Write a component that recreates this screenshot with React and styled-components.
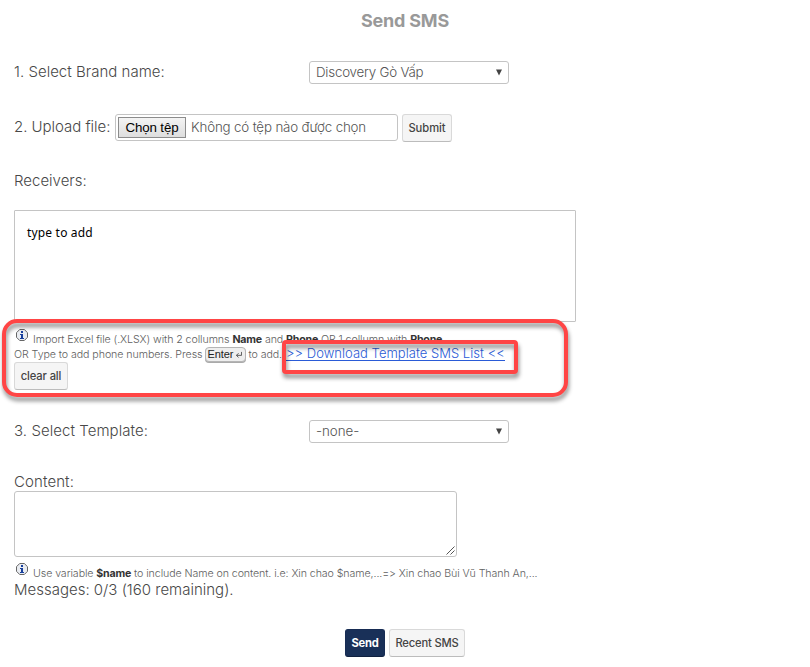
import React from "react";
import styled, { createGlobalStyle } from "styled-components";

const Global = createGlobalStyle`
  * { box-sizing: border-box; }
  body { margin: 0; background: #fff; color: #484848; font-family: Inter, "Liberation Sans", sans-serif; font-weight: 300; font-feature-settings: "calt" 0; }
`;

const Page = styled.main`
  position: relative;
  width: 810px;
  height: 667px;
  overflow: hidden;
  padding-left: 14px;
  display: flex;
  flex-direction: column;
`;

const Title = styled.h1`
  margin: 0 14px 0 0;
  height: 61px;
  padding: 9px 0 0 0;
  text-align: center;
  color: #999;
  font-size: 18px;
  line-height: 24px;
  font-weight: 700;
  letter-spacing: -0.2px;
`;

const Row = styled.div`
  display: flex;
  align-items: ${(p) => p.$align || "center"};
  flex: none;
  height: ${(p) => p.$h}px;
  margin-bottom: ${(p) => p.$after || 0}px;
  gap: 4px;
`;

const Actions = styled(Row)`
  justify-content: center;
  padding-right: 14px;
`;

const Label = styled.label`
  flex: none;
  width: ${(p) => (p.$w ? p.$w + "px" : "auto")};
  font-size: 15px;
  line-height: 18px;
  padding-bottom: ${(p) => p.$raise || 0}px;
  padding-top: ${(p) => p.$drop || 0}px;
  letter-spacing: ${(p) => p.$ls || 0}px;
  white-space: nowrap;
`;

const SelectBox = styled.div`
  width: 200px;
  height: 23px;
  border: 1px solid #c4c4c4;
  border-radius: 3px;
  padding: 0 6px 1px;
  display: flex;
  align-items: center;
  justify-content: space-between;
  font-size: 13.33px;
  color: #555;
  letter-spacing: ${(p) => p.$ls || 0}px;
`;

const Arrow = styled.svg`
  width: 6px;
  height: 7px;
  fill: #444;
`;

const FileBox = styled.div`
  width: 283px;
  height: 27px;
  border: 1px solid #c4c4c4;
  border-radius: 3px;
  padding: 0 2px;
  display: flex;
  align-items: center;
  gap: 5px;
  font-size: 13.33px;
  color: #555;
  white-space: nowrap;
  letter-spacing: -0.16px;
`;

const FileName = styled.span`
  padding-bottom: 1px;
`;

const FileButton = styled.span`
  width: 68px;
  height: 21px;
  border: 1px solid #8c8c8c;
  background: linear-gradient(#f4f4f4, #dedede);
  color: #000;
  font: 400 13.33px/19px "Liberation Sans", sans-serif;
  letter-spacing: -0.15px;
  text-align: center;
`;

const Button = styled.button`
  width: ${(p) => p.$w}px;
  height: 28px;
  flex: none;
  padding: 0 0 1px;
  border: 1px solid ${(p) => (p.$primary ? "#172c54" : "#d9d9d9")};
  border-bottom-color: ${(p) => (p.$primary ? "#10203f" : "#bcbcbc")};
  border-radius: 3px;
  background: ${(p) => (p.$primary ? "#193058" : "#f5f5f5")};
  color: ${(p) => (p.$primary ? "#fff" : "#444")};
  font-family: Inter, sans-serif;
  font-size: 11.2px;
  line-height: 14px;
  font-weight: ${(p) => (p.$primary ? 700 : 450)};
  letter-spacing: ${(p) => p.$ls || 0}px;
  white-space: nowrap;
`;

const TextBox = styled.div`
  flex: none;
  width: ${(p) => p.$w}px;
  height: ${(p) => p.$h}px;
  border: 1px solid #c4c4c4;
  border-radius: ${(p) => p.$r}px;
  display: flex;
`;

const Typed = styled.span`
  margin: 13px 12px;
  color: #000;
  font: 400 12px/18px "Noto Sans", sans-serif;
  letter-spacing: 0.18px;
`;

const Grip = styled.svg`
  width: 9px;
  height: 9px;
  margin: auto 1px 1px auto;
  stroke: #555;
  fill: none;
`;

const Hint = styled.div`
  display: flex;
  align-items: center;
  flex: none;
  height: ${(p) => p.$h}px;
  padding-top: ${(p) => p.$drop || 0}px;
  font-size: 10.67px;
  line-height: 15px;
  color: #606060;
  white-space: pre;
  letter-spacing: ${(p) => p.$ls || 0}px;
  b { font-weight: 700; color: #333; letter-spacing: -0.2px; }
`;

const InfoSvg = styled.svg`
  width: 12px;
  height: 12px;
  flex: none;
  margin: -8px 5px 0 2px;
`;

const Key = styled.kbd`
  width: 41px;
  height: 15px;
  margin: 0 3px 0 2px;
  border: 1px solid #b5b5b5;
  border-radius: 4px;
  background: #eee;
  box-shadow: 0 1px 0 #aaa;
  display: flex;
  align-items: center;
  justify-content: center;
  gap: 3px;
  color: #222;
  font: 400 11px/13px "Liberation Sans", sans-serif;
  letter-spacing: -0.1px;
`;

const ReturnSvg = styled.svg`
  width: 6px;
  height: 7px;
  margin-bottom: 1px;
  fill: none;
  stroke: #444;
`;

const Link = styled.a`
  margin-left: 4px;
  margin-bottom: 1px;
  font-size: 13px;
  line-height: 13px;
  color: #2a5bd7;
  border-bottom: 1px solid #2a5bd7;
  letter-spacing: 0.03px;
`;

const Marker = styled.div`
  position: absolute;
  left: ${(p) => p.$x}px;
  top: ${(p) => p.$y}px;
  width: ${(p) => p.$w}px;
  height: ${(p) => p.$h}px;
  border: 4px solid #ff4545;
  border-radius: ${(p) => p.$r}px;
  filter: drop-shadow(1px 4px 2px rgba(0, 0, 0, 0.45));
  pointer-events: none;
`;

const Down = () => (
  <Arrow viewBox="0 0 6 7"><path d="M0 0.5h6L3 6.5z" /></Arrow>
);

const Info = () => (
  <InfoSvg viewBox="0 0 12 12">
    <path d="M3.7 .5h4.6l3.2 3.2v4.6l-3.2 3.2H3.7L.5 8.3V3.7z" fill="#e9ecf1" stroke="#666" />
    <path d="M5 2h2v2H5zM4 5h3v4h1v1H4V9h1V6H4z" fill="#173f9c" />
  </InfoSvg>
);

export default function App() {
  return (
    <>
      <Global />
      <Page>
        <Title>Send SMS</Title>
        <Row $h={23} $after={30}>
          <Label $w={291} $raise={1} $ls={0.02}>1. Select Brand name:</Label>
          <SelectBox $ls={-0.22}><span>Discovery Gò Vấp</span><Down /></SelectBox>
        </Row>
        <Row $h={28} $after={30} $align="flex-start">
          <Label $w={97} $drop={4} $ls={-0.03}>2. Upload file:</Label>
          <FileBox><FileButton>Chọn tệp</FileButton><FileName>Không có tệp nào được chọn</FileName></FileBox>
          <Button $w={50} $ls={-0.05}>Submit</Button>
        </Row>
        <Row $h={18} $after={20}><Label>Receivers:</Label></Row>
        <TextBox $w={562} $h={112} $r={1}><Typed>type to add</Typed></TextBox>
        <Hint $h={25} $drop={9} $ls={-0.09}>
          <Info /><span>Import Excel file (.XLSX) with 2 collumns <b>Name</b> and <b>Phone</b> OR 1 collumn with <b>Phone</b></span>
        </Hint>
        <Hint $h={15} $ls={-0.08}>
          <span>OR Type to add phone numbers. Press</span>
          <Key>Enter<ReturnSvg viewBox="0 0 7 8"><path d="M6.5 1v4h-6M3 2.5L.5 5 3 7.5" /></ReturnSvg></Key>
          <span>to add.</span>
          <Link>&gt;&gt; Download Template SMS List &lt;&lt;</Link>
        </Hint>
        <Row $h={28} $after={30}><Button $w={54} $ls={-0.12}>clear all</Button></Row>
        <Row $h={23} $after={30}>
          <Label $w={291} $raise={1} $ls={0.06}>3. Select Template:</Label>
          <SelectBox><span>-none-</span><Down /></SelectBox>
        </Row>
        <Row $h={18}><Label $ls={0.1}>Content:</Label></Row>
        <TextBox $w={443} $h={66} $r={3}><Grip viewBox="0 0 9 9"><path d="M0.5 8.5l8-8M4.5 8.5l4-4" /></Grip></TextBox>
        <Hint $h={24} $drop={8} $ls={-0.095}>
          <Info /><span>Use variable <b>$name</b> to include Name on content. i.e: Xin chao $name,...=&gt; Xin chao Bùi Vũ Thanh An,...</span>
        </Hint>
        <Row $h={18} $after={30}><Label>Messages: 0/3 (160 remaining).</Label></Row>
        <Actions $h={28}>
          <Button $w={40} $primary $ls={-0.25}>Send</Button>
          <Button $w={76} $ls={-0.17}>Recent SMS</Button>
        </Actions>
        <Marker $x={2} $y={319} $w={566} $h={78} $r={15} />
        <Marker $x={282} $y={340} $w={236} $h={34} $r={4} />
      </Page>
    </>
  );
}
